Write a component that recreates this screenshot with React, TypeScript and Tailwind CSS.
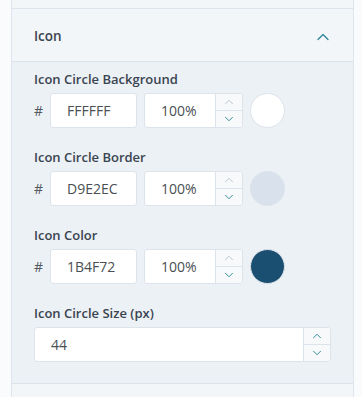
import { ChevronUp, ChevronDown } from "lucide-react";

type ColorRow = {
  label: string;
  hex: string;
  swatch: string;
};

const rows: ColorRow[] = [
  { label: "Icon Circle Background", hex: "FFFFFF", swatch: "bg-[#ffffff]" },
  { label: "Icon Circle Border", hex: "D9E2EC", swatch: "bg-[#d9e2ec]" },
  { label: "Icon Color", hex: "1B4F72", swatch: "bg-[#1b4f72]" },
];

function Spinner({ upDisabled }: { upDisabled?: boolean }) {
  return (
    <div className="flex flex-col w-[27px] border-l border-[#dde3ea] bg-[#f7f9fb]">
      <button className="flex-1 flex items-center justify-center border-b border-[#dde3ea]">
        <ChevronUp size={14} strokeWidth={1.6} className={upDisabled ? "text-[#b9c3cc]" : "text-[#2a8594]"} />
      </button>
      <button className="flex-1 flex items-center justify-center">
        <ChevronDown size={14} strokeWidth={1.6} className="text-[#2a8594]" />
      </button>
    </div>
  );
}

export default function App() {
  return (
    <div
      className="w-[362px] h-[397px] flex bg-[#fafbfc] text-[#3a4450] overflow-hidden"
      style={{ fontFamily: "'Open Sans', sans-serif" }}
    >
      <div className="ml-[11px] w-[343px] flex flex-col border-x border-[#dfe5ec]">
        <div className="h-[9px] bg-[#f3f6f9] border-b border-[#dde3ea]" />

        {/* Section header */}
        <div className="h-[53px] flex items-center justify-between pl-[22px] pr-[20px] pt-[3px] bg-[#f3f6f9] border-b border-[#dde3ea]">
          <span className="text-[13.5px] font-semibold">Icon</span>
          <ChevronUp size={20} strokeWidth={1.5} className="text-[#2a8594]" />
        </div>

        {/* Section body */}
        <div className="bg-[#ecf1f6] pl-[22px] pr-[23px] pt-[9px] pb-[21px] flex flex-col gap-[21px] border-b border-[#dde3ea]">
          {rows.map((row) => (
            <div key={row.label} className="flex flex-col gap-[6px]">
              <label className="text-[13px] font-semibold leading-4">{row.label}</label>
              <div className="flex items-center h-[35px]">
                <span className="w-[16px] text-[14px] text-[#54595e]">#</span>
                <div className="w-[87px] h-full flex items-center pl-4 bg-white border border-[#dde3ea] rounded-[3px] text-[14px] text-[#4a4f54]">
                  {row.hex}
                </div>
                <div className="ml-[7px] w-[99px] h-full flex bg-white border border-[#dde3ea] rounded-[3px] overflow-hidden">
                  <div className="flex-1 flex items-center pl-4 text-[14px] text-[#4a4f54]">100%</div>
                  <Spinner upDisabled />
                </div>
                <div className={`ml-[7px] w-[35px] h-[35px] rounded-full border border-[#dde3ea] ${row.swatch}`} />
              </div>
            </div>
          ))}

          <div className="flex flex-col gap-[6px]">
            <label className="text-[13px] font-semibold leading-4">Icon Circle Size (px)</label>
            <div className="w-[297px] h-[35px] flex bg-white border border-[#dde3ea] rounded-[3px] overflow-hidden">
              <div className="flex-1 flex items-center pl-4 text-[14px] text-[#4a4f54]">44</div>
              <Spinner />
            </div>
          </div>
        </div>

        <div className="flex-1 bg-[#f3f6f9]" />
      </div>
    </div>
  );
}
